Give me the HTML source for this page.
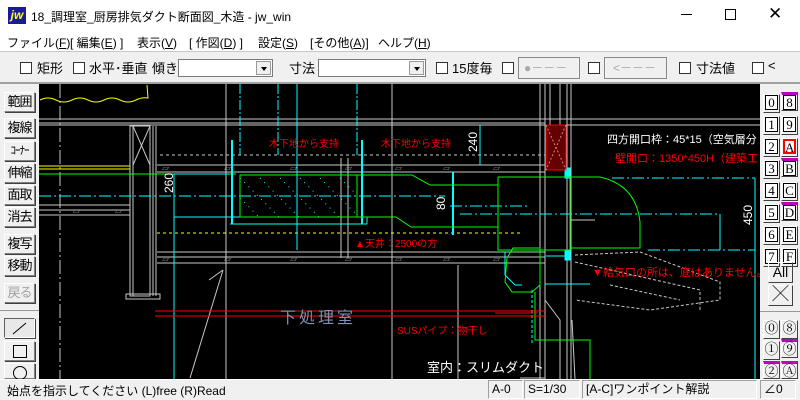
<!DOCTYPE html>
<html><head><meta charset="utf-8"><style>
*{margin:0;padding:0;box-sizing:border-box}
body{width:800px;height:400px;overflow:hidden;background:#f0f0f0;font-family:"Liberation Sans","Noto Sans CJK JP",sans-serif;font-size:12px;color:#000;position:relative}
.a{position:absolute;white-space:nowrap}
.cb{position:absolute;width:12px;height:12px;border:1px solid #333;background:#fff}
.btn{position:absolute;left:4px;width:31px;height:20px;background:#f0f0f0;border:1px solid;border-color:#fff #808080 #808080 #fff;box-shadow:1px 1px 0 #404040;font-size:13px;text-align:center;line-height:18px;letter-spacing:-1px}
.rb{position:absolute;width:17px;height:19px;background:#f0f0f0;border:1px solid;border-color:#fff #404040 #404040 #fff;font-family:"Liberation Serif","Noto Serif CJK SC",serif;font-size:14px;text-align:center;line-height:17px}
.rb span{display:inline-block;width:13px;height:15px;border:1px solid #000;line-height:13px;background:#fff;font-size:13px}
.mg{border-top:3px solid #c000c0}
.combo{position:absolute;height:18px;background:#fff;border:1px solid #7a7a7a}
.combo i{position:absolute;right:1px;top:1px;width:15px;height:14px;background:#f0f0f0;border:1px solid #999}
.combo i:after{content:"";position:absolute;left:4px;top:5px;border:3px solid transparent;border-top:4px solid #000}
.sf{position:absolute;top:380px;height:19px;border:1px solid;border-color:#a0a0a0 #fff #fff #a0a0a0;font-size:12px;line-height:17px;padding-left:3px}
.tl{position:absolute;top:58px;font-size:13px;white-space:nowrap}
</style></head><body>
<div class="a" style="left:0;top:0;width:800px;height:31px;background:#fff"></div>
<div class="a" style="left:8px;top:7px;width:18px;height:17px;background:#1a1aa0;color:#ff0;font-weight:bold;font-style:italic;font-size:12px;line-height:16px;text-align:center">jw</div>
<div class="a" style="left:31px;top:8px;font-size:12px">18_調理室_厨房排気ダクト断面図_木造 - jw_win</div>
<div class="a" style="left:681px;top:14px;width:11px;height:1px;background:#000"></div>
<div class="a" style="left:725px;top:9px;width:11px;height:11px;border:1px solid #000"></div>
<div class="a" style="left:768px;top:4px;font-size:17px">✕</div>
<div class="a" style="left:0;top:31px;width:800px;height:20px;background:#fff"></div>
<div class="a" style="left:7px;top:34px">ファイル(<u>F</u>)</div>
<div class="a" style="left:70px;top:34px">[ 編集(<u>E</u>) ]</div>
<div class="a" style="left:137px;top:34px">表示(<u>V</u>)</div>
<div class="a" style="left:189px;top:34px">[ 作図(<u>D</u>) ]</div>
<div class="a" style="left:258px;top:34px">設定(<u>S</u>)</div>
<div class="a" style="left:310px;top:34px">[その他(<u>A</u>)]</div>
<div class="a" style="left:378px;top:34px">ヘルプ(<u>H</u>)</div>
<div class="a" style="left:0;top:51px;width:800px;height:1px;background:#c8c8c8"></div>
<div class="cb" style="left:20px;top:62px"></div><div class="tl" style="left:37px">矩形</div>
<div class="cb" style="left:73px;top:62px"></div><div class="tl" style="left:89px">水平･垂直</div>
<div class="tl" style="left:152px">傾き</div>
<div class="combo" style="left:178px;top:59px;width:95px"><i></i></div>
<div class="tl" style="left:289px">寸法</div>
<div class="combo" style="left:318px;top:59px;width:108px"><i></i></div>
<div class="cb" style="left:436px;top:62px"></div><div class="tl" style="left:452px">15度毎</div>
<div class="cb" style="left:502px;top:62px"></div>
<div class="a" style="left:518px;top:57px;width:62px;height:22px;border:1px solid #888;background:#f0f0f0;color:#aaa;font-size:12px;line-height:20px;padding-left:5px">●－－－</div>
<div class="cb" style="left:588px;top:62px"></div>
<div class="a" style="left:604px;top:57px;width:63px;height:22px;border:1px solid #888;background:#f0f0f0;color:#aaa;font-size:12px;line-height:20px;padding-left:8px">&lt;－－－</div>
<div class="cb" style="left:679px;top:62px"></div><div class="tl" style="left:696px">寸法値</div>
<div class="cb" style="left:752px;top:62px"></div><div class="tl" style="left:768px">&lt;</div>
<div class="a" style="left:0;top:82px;width:800px;height:2px;background:#a0a0a0"></div>
<div class="a" style="left:0;top:84px;width:39px;height:295px;background:#f0f0f0"></div>
<div class="btn" style="top:92px">範囲</div>
<div class="btn" style="top:118px">複線</div>
<div class="btn" style="top:141px;font-size:11px">ｺｰﾅｰ</div>
<div class="btn" style="top:163px">伸縮</div>
<div class="btn" style="top:185px">面取</div>
<div class="btn" style="top:207px">消去</div>
<div class="btn" style="top:234px">複写</div>
<div class="btn" style="top:256px">移動</div>
<div class="btn" style="top:283px;color:#a0a0a0">戻る</div>
<div class="a" style="left:0;top:310px;width:39px;height:1px;background:#999"></div>
<div class="btn" style="top:318px;background:#e8e8e8;border-color:#606060 #fff #fff #606060"><svg width="29" height="18"><line x1="8" y1="15" x2="21" y2="4" stroke="#000"/></svg></div>
<div class="btn" style="top:341px"><div style="margin:3px auto;width:14px;height:13px;border:1px solid #000"></div></div>
<div class="btn" style="top:363px;height:16px"><div style="margin:2px auto;width:14px;height:14px;border:1px solid #000;border-radius:50%"></div></div>
<svg class="a" style="left:39px;top:84px" width="721" height="295" viewBox="39 84 721 295" font-family="Liberation Sans,Noto Sans CJK JP,sans-serif">
<rect x="39" y="84" width="721" height="295" fill="#000"/>
<g stroke="#c8c8c8" fill="none" stroke-width="1">
<line x1="60" y1="84" x2="60" y2="379" stroke-dasharray="14 3 2 3"/>
<line x1="226" y1="84" x2="226" y2="379"/>
<line x1="392" y1="84" x2="392" y2="379"/>
<line x1="458" y1="265" x2="458" y2="379"/>
<line x1="39" y1="119" x2="760" y2="119"/><line x1="39" y1="125" x2="760" y2="125"/>
<line x1="39" y1="123" x2="545" y2="123"/>
<rect x="130" y="126" width="20" height="170"/><line x1="133" y1="126" x2="133" y2="296"/><line x1="153" y1="126" x2="153" y2="296"/><line x1="156" y1="126" x2="156" y2="296"/>
<line x1="133" y1="126" x2="150" y2="165"/><line x1="150" y1="126" x2="133" y2="165"/>
<rect x="126" y="294" width="34" height="5"/>
<line x1="157" y1="165" x2="545" y2="165"/><line x1="157" y1="172" x2="545" y2="172"/>
<line x1="39" y1="205" x2="130" y2="205"/><line x1="39" y1="210" x2="130" y2="210"/><line x1="39" y1="215" x2="130" y2="215"/>
<line x1="157" y1="252" x2="545" y2="252"/><line x1="157" y1="257" x2="545" y2="257"/><line x1="157" y1="263" x2="545" y2="263"/>
<line x1="160" y1="155" x2="545" y2="155" stroke-dasharray="3 3"/>
<line x1="190" y1="378" x2="223" y2="270"/><line x1="223" y1="270" x2="209" y2="280"/>
<line x1="341" y1="158" x2="341" y2="258"/><line x1="348" y1="158" x2="348" y2="258"/>
<line x1="540" y1="84" x2="540" y2="379"/><line x1="545" y1="84" x2="545" y2="379"/><line x1="567" y1="84" x2="567" y2="379"/><line x1="571" y1="84" x2="571" y2="379"/>
<line x1="550" y1="84" x2="550" y2="125"/><line x1="560" y1="84" x2="560" y2="125"/>
<line x1="571" y1="220" x2="595" y2="220"/>
<path d="M575 255 L640 252 L720 282 L720 300 L650 310 L575 300" stroke-dasharray="3 2"/>
<path d="M575 262 L700 290 L700 310 M610 285 L680 300" stroke-dasharray="3 2"/>
<path d="M545 300 L560 320 L560 379 M572 320 L575 379" />
<line x1="520" y1="378" x2="545" y2="378"/>
</g>
<g fill="#c8c8c8" font-size="7">
<text x="162" y="171">▱</text><text x="224" y="171">▱</text><text x="290" y="171">▱</text><text x="345" y="171">▱</text><text x="395" y="171">▱</text><text x="443" y="171">▱</text><text x="493" y="171">▱</text>
<text x="162" y="262">▱</text><text x="224" y="262">▱</text><text x="290" y="262">▱</text><text x="345" y="262">▱</text><text x="395" y="262">▱</text><text x="443" y="262">▱</text><text x="493" y="262">▱</text>
<text x="115" y="214">▱</text><text x="73" y="214">▱</text>
</g>
<path d="M40 100 q8 -4 16 0 q8 4 16 0 q8 -4 16 0 q8 4 16 0 q8 -4 16 0 q8 4 16 0 q6 -3 12 -2 L147 85" stroke="#ff0" fill="none"/>
<line x1="39" y1="166" x2="130" y2="166" stroke="#ff0"/><line x1="39" y1="169" x2="130" y2="169" stroke="#ff0"/>
<line x1="157" y1="233" x2="520" y2="233" stroke="#ff0" stroke-dasharray="3 3"/>
<line x1="39" y1="174" x2="236" y2="174" stroke="#0f0"/>
<g stroke="#0ff" fill="none">
<line x1="174" y1="174" x2="174" y2="379"/>
<line x1="174" y1="174" x2="230" y2="174"/>
<line x1="174" y1="217" x2="236" y2="217"/>
<line x1="278" y1="84" x2="278" y2="155" stroke-dasharray="10 2 2 2"/>
<line x1="240" y1="84" x2="240" y2="155" stroke-dasharray="10 2 2 2"/>
<line x1="357" y1="84" x2="357" y2="155" stroke-dasharray="10 2 2 2"/>
<line x1="297" y1="84" x2="297" y2="250"/>
<line x1="232" y1="140" x2="232" y2="224" stroke-width="2"/>
<line x1="362" y1="140" x2="362" y2="224" stroke-width="2"/>
<line x1="39" y1="196" x2="445" y2="196" stroke-dasharray="12 3 2 3"/>
<line x1="230" y1="217" x2="367" y2="217"/><line x1="230" y1="224" x2="367" y2="224"/><line x1="367" y1="217" x2="367" y2="224"/>
<line x1="453" y1="172" x2="453" y2="235" stroke-width="2"/>
<line x1="450" y1="206" x2="530" y2="206" stroke-dasharray="12 3 2 3"/>
<line x1="460" y1="214" x2="720" y2="214" stroke-dasharray="12 3 2 3"/>
<line x1="720" y1="214" x2="720" y2="250"/>
<line x1="648" y1="250" x2="755" y2="250" stroke-dasharray="12 3 2 3"/>
<line x1="612" y1="178" x2="755" y2="178" stroke-dasharray="12 3 2 3"/>
<line x1="755" y1="178" x2="755" y2="379"/>
<line x1="480" y1="125" x2="480" y2="165"/>
<line x1="545" y1="284" x2="590" y2="284"/>
<path d="M505 252 L505 275 L515 285 L522 285" />
<line x1="532" y1="290" x2="532" y2="345" stroke-dasharray="3 2"/>
<rect x="565" y="168" width="5" height="10" fill="#0ff"/>
<rect x="565" y="250" width="5" height="10" fill="#0ff"/>
<line x1="546" y1="250" x2="570" y2="250"/><line x1="546" y1="256" x2="570" y2="256"/>
</g>
<g stroke="#0ff" stroke-dasharray="1 5" stroke-width="1">
<path d="M240 178 L280 218 M260 178 L300 218 M280 178 L320 218 M300 178 L340 218 M320 178 L357 215 M340 178 L357 195 M240 198 L260 218"/>
</g>
<rect x="240" y="175" width="117" height="42" fill="none" stroke="#0f0"/>
<g stroke="#0f0" fill="none">
<path d="M357 175 L412 175 L430 185 L498 185"/>
<path d="M357 217 L396 217 L411 227 L498 227"/>
<rect x="498" y="177" width="72" height="73"/>
<path d="M570 177 L600 177 Q636 185 640 222 L640 248 L570 248"/>
<path d="M513 248 L507 258 L505 282 L512 292 L532 292 L540 285 L540 248 Z"/>
<path d="M535 292 L535 340 L590 340 L590 379"/>
</g>
<rect x="546" y="125" width="20" height="45" fill="#600" stroke="#f00"/>
<path d="M546 125 L566 170 M566 125 L546 170" stroke="#c88" stroke-dasharray="2 2"/>
<line x1="155" y1="311" x2="545" y2="311" stroke="#f00"/><line x1="155" y1="316" x2="545" y2="316" stroke="#f00"/>
<line x1="495" y1="313" x2="538" y2="313" stroke="#f00"/>
<g fill="#f00" font-size="10">
<text x="269" y="147">木下地から支持</text>
<text x="381" y="147">木下地から支持</text>
<text x="355" y="247">▲天井：2500の方</text>
<text x="397" y="334" font-size="10">SUSパイプ：物干し</text>
<text x="592" y="276" font-size="11">▼給気口の所は、底はありません。</text>
<text x="615" y="162" font-size="11">壁開口：1350*450H（建築工</text>
</g>
<text x="607" y="143" fill="#fff" font-size="11">四方開口枠：45*15（空気層分</text>
<text x="427" y="372" fill="#fff" font-size="13">室内：スリムダクト</text>
<text x="280" y="323" fill="#8090b0" font-size="16" letter-spacing="3">下処理室</text>
<g fill="#fff" font-size="12">
<text transform="translate(173,193) rotate(-90)">260</text>
<text transform="translate(477,152) rotate(-90)">240</text>
<text transform="translate(445,210) rotate(-90)">80</text>
<text transform="translate(752,225) rotate(-90)">450</text>
</g>
</svg>
<div class="a" style="left:760px;top:84px;width:40px;height:295px;background:#f0f0f0"></div>
<div class="rb" style="left:763px;top:94px"><span>0</span></div><div class="rb mg" style="left:781px;top:92px"><span>8</span></div>
<div class="rb" style="left:763px;top:116px"><span>1</span></div><div class="rb" style="left:781px;top:116px"><span>9</span></div>
<div class="rb" style="left:763px;top:138px"><span>2</span></div><div class="rb" style="left:781px;top:138px"><span style="border:2px solid #f00">A</span></div>
<div class="rb" style="left:763px;top:160px"><span>3</span></div><div class="rb mg" style="left:781px;top:158px"><span>B</span></div>
<div class="rb" style="left:763px;top:182px"><span>4</span></div><div class="rb" style="left:781px;top:182px"><span>C</span></div>
<div class="rb" style="left:763px;top:204px"><span>5</span></div><div class="rb mg" style="left:781px;top:202px"><span>D</span></div>
<div class="rb" style="left:763px;top:226px"><span>6</span></div><div class="rb" style="left:781px;top:226px"><span>E</span></div>
<div class="rb" style="left:763px;top:248px"><span>7</span></div><div class="rb" style="left:781px;top:248px"><span>F</span></div>
<div class="a" style="left:768px;top:262px;width:25px;height:21px;border:1px solid;border-color:#fff #404040 #404040 #fff;font-size:14px;text-align:center;line-height:19px">All</div>
<div class="a" style="left:768px;top:285px;width:25px;height:21px;border:1px solid;border-color:#fff #404040 #404040 #fff;font-size:16px;text-align:center;line-height:18px">╳</div>
<div class="a" style="left:760px;top:311px;width:40px;height:1px;background:#999"></div>
<div class="rb" style="left:763px;top:320px">⓪</div><div class="rb" style="left:781px;top:320px">⑧</div>
<div class="rb" style="left:763px;top:341px">①</div><div class="rb mg" style="left:781px;top:339px">⑨</div>
<div class="rb mg" style="left:763px;top:361px;height:18px">②</div><div class="rb mg" style="left:781px;top:361px;height:18px">Ⓐ</div>
<div class="a" style="left:0;top:379px;width:800px;height:21px;background:#f0f0f0;border-top:1px solid #fff"></div>
<div class="a" style="left:7px;top:382px;font-size:12px">始点を指示してください (L)free (R)Read</div>
<div class="sf" style="left:488px;width:35px">A-0</div>
<div class="sf" style="left:524px;width:56px">S=1/30</div>
<div class="sf" style="left:582px;width:175px">[A-C]ワンポイント解説</div>
<div class="sf" style="left:760px;width:36px">∠0</div>
</body></html>
